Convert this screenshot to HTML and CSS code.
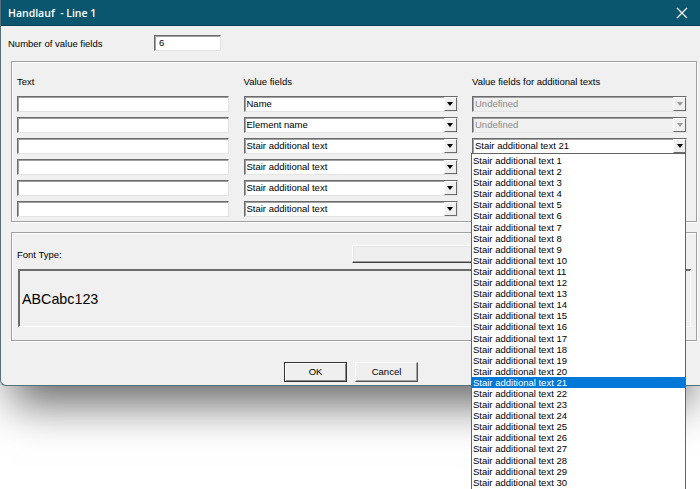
FILE: index.html
```html
<!DOCTYPE html>
<html>
<head>
<meta charset="utf-8">
<link rel="stylesheet" href="styles.css">
</head>
<body>
<div class="dialog">
  <div class="titlebar">
    <span class="title">Handlauf &nbsp;- Line 1</span>
    <svg class="close" width="12" height="12" viewBox="0 0 12 12"><path d="M1 1 L11 11 M11 1 L1 11" stroke="#fff" stroke-width="1.2" fill="none"/></svg>
  </div>
  <div class="content">
    <div class="numrow">
      <span class="numlabel">Number of value fields</span>
      <div class="edit numedit">6</div>
    </div>

    <div class="group fields">
      <div class="grid">
        <div class="hdr">Text</div>
        <div class="hdr">Value fields</div>
        <div class="hdr">Value fields for additional texts</div>

        <div class="edit"></div>
        <div class="combo"><span class="ctext">Name</span><span class="cbtn"><i class="tri"></i></span></div>
        <div class="combo disabled"><span class="ctext">Undefined</span><span class="cbtn"><i class="tri"></i></span></div>

        <div class="edit"></div>
        <div class="combo"><span class="ctext">Element name</span><span class="cbtn"><i class="tri"></i></span></div>
        <div class="combo disabled"><span class="ctext">Undefined</span><span class="cbtn"><i class="tri"></i></span></div>

        <div class="edit"></div>
        <div class="combo"><span class="ctext">Stair additional text</span><span class="cbtn"><i class="tri"></i></span></div>
        <div class="combo open"><span class="ctext">Stair additional text 21</span><span class="cbtn"><i class="tri"></i></span></div>

        <div class="edit"></div>
        <div class="combo"><span class="ctext">Stair additional text</span><span class="cbtn"><i class="tri"></i></span></div>
        <div class="spacer"></div>

        <div class="edit"></div>
        <div class="combo"><span class="ctext">Stair additional text</span><span class="cbtn"><i class="tri"></i></span></div>
        <div class="spacer"></div>

        <div class="edit"></div>
        <div class="combo"><span class="ctext">Stair additional text</span><span class="cbtn"><i class="tri"></i></span></div>
        <div class="spacer"></div>
      </div>
    </div>

    <div class="group font">
      <div class="fontrow">
        <span class="fontlabel">Font Type:</span>
        <div class="fontbtn"></div>
      </div>
      <div class="preview">ABCabc123</div>
    </div>

    <div class="buttons">
      <div class="btn ok">OK</div>
      <div class="btn">Cancel</div>
    </div>
  </div>
</div>

<div class="droplist">
  <div class="item">Stair additional text 1</div>
  <div class="item">Stair additional text 2</div>
  <div class="item">Stair additional text 3</div>
  <div class="item">Stair additional text 4</div>
  <div class="item">Stair additional text 5</div>
  <div class="item">Stair additional text 6</div>
  <div class="item">Stair additional text 7</div>
  <div class="item">Stair additional text 8</div>
  <div class="item">Stair additional text 9</div>
  <div class="item">Stair additional text 10</div>
  <div class="item">Stair additional text 11</div>
  <div class="item">Stair additional text 12</div>
  <div class="item">Stair additional text 13</div>
  <div class="item">Stair additional text 14</div>
  <div class="item">Stair additional text 15</div>
  <div class="item">Stair additional text 16</div>
  <div class="item">Stair additional text 17</div>
  <div class="item">Stair additional text 18</div>
  <div class="item">Stair additional text 19</div>
  <div class="item">Stair additional text 20</div>
  <div class="item selected">Stair additional text 21</div>
  <div class="item">Stair additional text 22</div>
  <div class="item">Stair additional text 23</div>
  <div class="item">Stair additional text 24</div>
  <div class="item">Stair additional text 25</div>
  <div class="item">Stair additional text 26</div>
  <div class="item">Stair additional text 27</div>
  <div class="item">Stair additional text 28</div>
  <div class="item">Stair additional text 29</div>
  <div class="item">Stair additional text 30</div>
</div>
</body>
</html>
```

FILE: styles.css
```css
* { box-sizing: border-box; }

html, body {
  margin: 0;
  padding: 0;
  width: 700px;
  height: 489px;
  overflow: hidden;
  background: #ffffff;
  font-family: "Liberation Sans", Arial, sans-serif;
  font-size: 9.5px;
  color: #000;
}

.dialog {
  position: relative;
  width: 702px;
  height: 386px;
  background: #f0f0f0;
  border-bottom: 1px solid #56707c;
  border-left: 1px solid #56707c;
  border-bottom-left-radius: 6px;
  box-shadow: 0 30px 42px -12px rgba(0, 0, 0, 0.6);
}

.titlebar {
  height: 26px;
  background: #0b566f;
  border-bottom: 1px solid #073f52;
  display: flex;
  align-items: center;
  justify-content: space-between;
  padding: 0 14px 0 7px;
}

.title {
  color: #ffffff;
  font-family: "Open Sans", "Noto Sans", sans-serif;
  font-weight: 600;
  font-size: 10.5px;
}

.close { display: block; }

.content {
  padding: 0 0 0 7px;
  display: flex;
  flex-direction: column;
}

.numrow {
  margin-top: 9px;
  display: flex;
  align-items: center;
  height: 16px;
}

.numlabel { width: 146px; }

.edit {
  height: 16px;
  background: #ffffff;
  border: 1px solid;
  border-color: #6b6b6b #e3e3e3 #e3e3e3 #6b6b6b;
  box-shadow: inset 1px 1px 0 #a0a0a0;
  padding: 0 0 0 4px;
  line-height: 14px;
}

.numedit { width: 67px; }

.group {
  margin-left: 3px;
  width: 686px;
  border: 1px solid #a0a0a0;
  box-shadow: inset 1px 1px 0 #ffffff, 1px 1px 0 #ffffff;
}

.fields {
  margin-top: 10px;
  height: 161px;
  padding: 14px 0 0 5px;
}

.grid {
  display: grid;
  grid-template-columns: 212px 214px 215px;
  grid-template-rows: 15px;
  grid-auto-rows: 16px;
  column-gap: 14.5px;
  row-gap: 5px;
}

.hdr { line-height: 12px; }

.combo {
  height: 16px;
  background: #ffffff;
  border: 1px solid;
  border-color: #6b6b6b #e3e3e3 #e3e3e3 #6b6b6b;
  box-shadow: inset 1px 1px 0 #a0a0a0;
  display: flex;
  align-items: stretch;
}

.ctext {
  flex: 1;
  padding-left: 2px;
  line-height: 14px;
  white-space: nowrap;
  overflow: hidden;
}

.cbtn {
  width: 13px;
  background: #f0f0f0;
  border-left: 1px solid #ffffff;
  border-top: 1px solid #ffffff;
  border-right: 1px solid #6b6b6b;
  border-bottom: 1px solid #6b6b6b;
  display: flex;
  align-items: center;
  justify-content: center;
}

.tri {
  width: 0;
  height: 0;
  border-left: 3.5px solid transparent;
  border-right: 3.5px solid transparent;
  border-top: 4px solid #000;
}

.combo.disabled { background: #f0f0f0; }
.combo.disabled .ctext { color: #8a8a8a; }
.combo.disabled .tri { border-top-color: #9a9a9a; }

.font {
  margin-top: 10px;
  height: 109px;
  padding: 12px 6px 0 5px;
}

.fontrow {
  display: flex;
  align-items: center;
  height: 18px;
}

.fontlabel { width: 335px; }

.fontbtn {
  width: 300px;
  height: 18px;
  background: #efefef;
  border: 1px solid;
  border-color: #ffffff #404040 #404040 #ffffff;
  box-shadow: inset -1px -1px 0 #a0a0a0, inset 1px 1px 0 #e3e3e3;
}

.preview {
  margin: 6px 0 0 1px;
  width: 673px;
  height: 58px;
  border-top: 2px solid #6b6b6b;
  border-left: 2px solid #6b6b6b;
  border-right: 1px solid #ffffff;
  border-bottom: 1px solid #ffffff;
  font-size: 14.3px;
  padding-left: 2px;
  line-height: 56px;
}

.buttons {
  margin-top: 21px;
  padding-left: 276px;
  display: flex;
  gap: 8px;
}

.btn {
  width: 63px;
  height: 20px;
  background: #efefef;
  border: 1px solid;
  border-color: #ffffff #555555 #555555 #ffffff;
  box-shadow: inset -1px -1px 0 #a0a0a0;
  text-align: center;
  line-height: 18px;
}

.btn.ok {
  border-color: #333333;
  box-shadow: inset 1px 1px 0 #ffffff, inset -1px -1px 0 #8a8a8a;
}

.droplist {
  position: absolute;
  left: 471px;
  top: 153px;
  bottom: 0;
  width: 215px;
  background: #ffffff;
  border: 1px solid #646464;
  border-bottom: none;
  padding-top: 1px;
}

.item {
  height: 11.1px;
  line-height: 11px;
  padding-left: 1px;
  white-space: nowrap;
}

.item.selected {
  background: #0078d7;
  color: #ffffff;
}
```
